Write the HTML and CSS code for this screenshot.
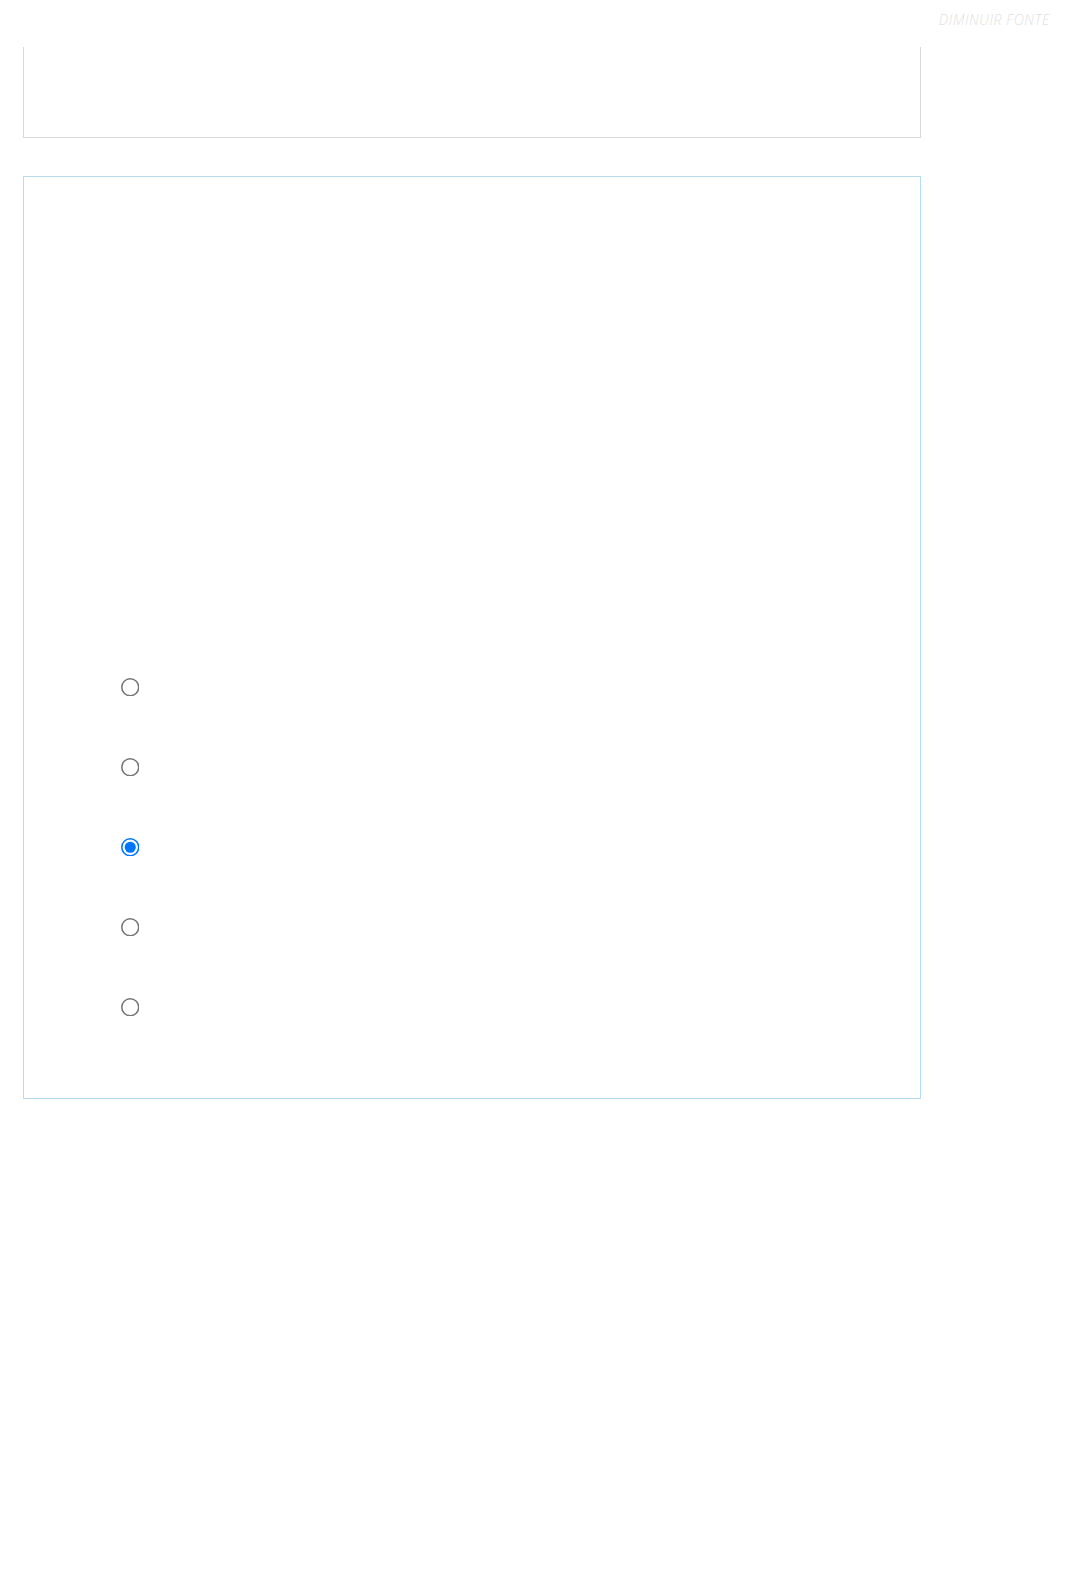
FILE: index.html
```html
<!DOCTYPE html>
<html lang="pt-BR">
<head>
    <meta charset="UTF-8">
    <meta name="viewport" content="width=device-width, initial-scale=1.0">
    <title>Questionário</title>
    <link rel="stylesheet" href="styles.css">
</head>
<body>
    <div id="topbar">
        <a href="#" class="fontsize">DIMINUIR FONTE</a>
    </div>

    <div class="card card-top"></div>

    <div class="card card-question">
        <form class="options">
            <input type="radio" name="answer" value="a">
            <input type="radio" name="answer" value="b">
            <input type="radio" name="answer" value="c" checked>
            <input type="radio" name="answer" value="d">
            <input type="radio" name="answer" value="e">
        </form>
    </div>
</body>
</html>
```

FILE: styles.css
```css
*{
    box-sizing: border-box;
}
body{
    margin: 0;
    background: #fff;
    font-family: "Open Sans", "Liberation Sans", sans-serif;
}

#topbar{
    height: 47px;
    display: flex;
    justify-content: flex-end;
    align-items: flex-start;
    padding-right: 29px;
}
.fontsize{
    margin-top: 10px;
    font-size: 14px;
    font-style: italic;
    font-weight: 300;
    letter-spacing: 0.6px;
    color: #e2e2e2;
    text-decoration: none;
}

.card{
    width: 898px;
    margin-left: 23px;
    background: #fff;
}
.card-top{
    height: 91px;
    border: 1px solid #d9d9d9;
    border-top: none;
}
.card-question{
    margin-top: 38px;
    border: 1px solid #b5dcf1;
    padding: 501px 0 80px 97px;
}

.options{
    display: flex;
    flex-direction: column;
    gap: 60px;
}
.options input{
    width: 13px;
    height: 13px;
    margin: 0;
    zoom: 1.54;
}
```
